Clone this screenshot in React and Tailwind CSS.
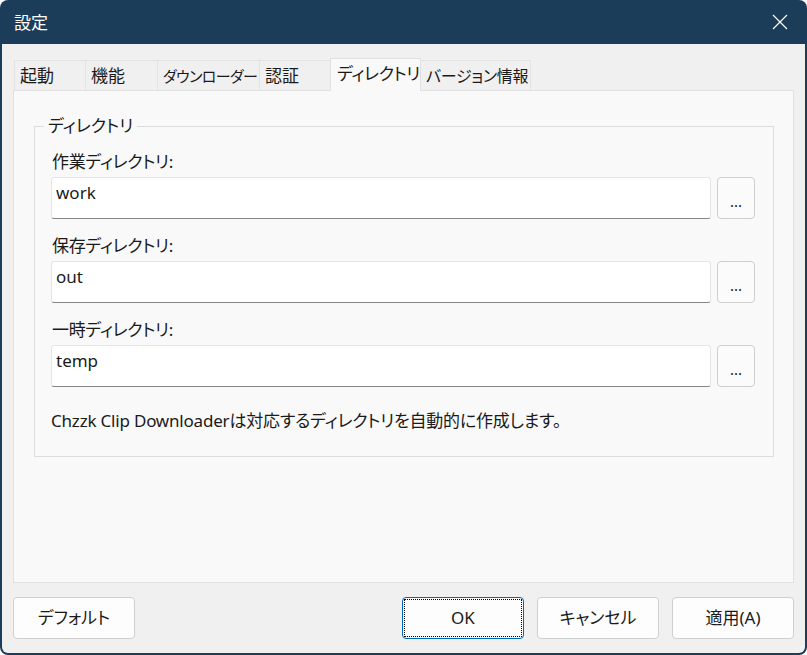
import React from "react";

const tabs = [
    { label: "起動", w: "w-[72px]" },
    { label: "機能", w: "w-[73px]" },
    { label: "ダウンローダー", w: "w-[103px]", tight: "text-[15px] tracking-[-0.6px]" },
    { label: "認証", w: "w-[72px]" },
    { label: "ディレクトリ", w: "w-[91px]", active: true },
    { label: "バージョン情報", w: "w-[111px]", tight: "text-[16px] tracking-[-0.3px]" },
];

const dirs = [
    { label: "作業ディレクトリ:", value: "work" },
    { label: "保存ディレクトリ:", value: "out" },
    { label: "一時ディレクトリ:", value: "temp" },
];

function DialogButton({ children, focused }) {
    return (
        <button
            className={`w-[122px] h-[42px] rounded-[4px] bg-[#fdfdfd] text-[17px] text-[#1a1a1a] flex items-center justify-center ${focused ? "border border-[#0067c0] p-[1px]" : "border border-[#d0d0d0]"
                }`}
        >
            {focused ? (
                <span className="w-full h-full border border-dotted border-black flex items-center justify-center">{children}</span>
            ) : (
                children
            )}
        </button>
    );
}

export default function App() {
    return (
        <div className="w-[807px] h-[655px] bg-white font-['Noto_Sans','Noto_Sans_CJK_JP',sans-serif] [font-feature-settings:'palt']">
            <div className="w-full h-full rounded-[8px] bg-[#1c3d5a] flex flex-col overflow-hidden">
                {/* title bar */}
                <div className="h-[44px] shrink-0 flex items-center justify-between pl-[14px] pr-[19px]">
                    <span className="text-[17px] text-white leading-none">設定</span>
                    <svg width="16" height="16" viewBox="0 0 16 16" className="text-white">
                        <path d="M1 1 L15 15 M15 1 L1 15" stroke="currentColor" strokeWidth="1.2" fill="none" />
                    </svg>
                </div>

                {/* client area */}
                <div className="flex-1 mx-[2px] mb-[2px] bg-[#f0f0f0] rounded-b-[6px] pt-[14px] flex flex-col">
                    {/* tabs */}
                    <div className="flex items-end h-[32px] ml-[12px]">
                        {tabs.map((t, i) =>
                            t.active ? (
                                <div
                                    key={i}
                                    className={`${t.w} h-[33px] -mb-px relative z-10 -ml-px border border-b-0 border-[#e0e0e0] bg-[#f9f9f9] pl-[6px] pt-[4px] text-[17px] tracking-[-0.4px] leading-[22px] text-[#1a1a1a] whitespace-nowrap`}
                                >
                                    {t.label}
                                </div>
                            ) : (
                                <div
                                    key={i}
                                    className={`${t.w} h-[30px] ${i > 0 ? "-ml-px" : ""} border border-b-0 border-[#e3e3e3] bg-[#f0f0f0] pl-[5px] pt-[4px] ${t.tight || "text-[17px]"} leading-[22px] text-[#1a1a1a] whitespace-nowrap`}
                                >
                                    {t.label}
                                </div>
                            )
                        )}
                    </div>

                    {/* tab panel */}
                    <div className="ml-[11px] w-[781px] h-[493px] shrink-0 border border-[#e0e0e0] bg-[#f9f9f9] pt-[25px] pl-[20px]">
                        <fieldset className="w-[740px] border border-[#dcdcdc]">
                            <legend className="ml-[9px] px-[4px] text-[17px] leading-[20px] text-[#1a1a1a]">ディレクトリ</legend>
                            <div className="pl-[16px] pr-[18px] pt-[16px] pb-[25px] flex flex-col">
                                {dirs.map((d, i) => (
                                    <div key={i} className={i > 0 ? "mt-[17px]" : ""}>
                                        <div className="pl-[1px] text-[17px] leading-[20px] text-[#1a1a1a] tracking-[-0.3px]">{d.label}</div>
                                        <div className="mt-[5px] flex gap-[6px]">
                                            <div className="w-[660px] h-[42px] border border-[#e5e5e5] border-b-[#868686] rounded-[3px] bg-white pl-[4px] pt-[5px] text-[17px] leading-[20px] text-[#1a1a1a]">
                                                {d.value}
                                            </div>
                                            <button className="w-[38px] h-[42px] border border-[#d0d0d0] rounded-[4px] bg-[#fbfbfb] text-[15px] leading-none text-[#1a1a1a] flex items-center justify-center pt-[6px]">
                                                ...
                                            </button>
                                        </div>
                                    </div>
                                ))}
                                <div className="mt-[24px] text-[17px] leading-[20px] text-[#1a1a1a] whitespace-nowrap tracking-[-0.2px]">
                                    Chzzk Clip Downloaderは対応するディレクトリを自動的に作成します。
                                </div>
                            </div>
                        </fieldset>
                    </div>

                    {/* bottom buttons */}
                    <div className="mt-[14px] ml-[11px] mr-[11px] flex justify-between">
                        <DialogButton>デフォルト</DialogButton>
                        <div className="flex gap-[13px]">
                            <DialogButton focused>OK</DialogButton>
                            <DialogButton>キャンセル</DialogButton>
                            <DialogButton>適用(A)</DialogButton>
                        </div>
                    </div>
                </div>
            </div>
        </div>
    );
}
